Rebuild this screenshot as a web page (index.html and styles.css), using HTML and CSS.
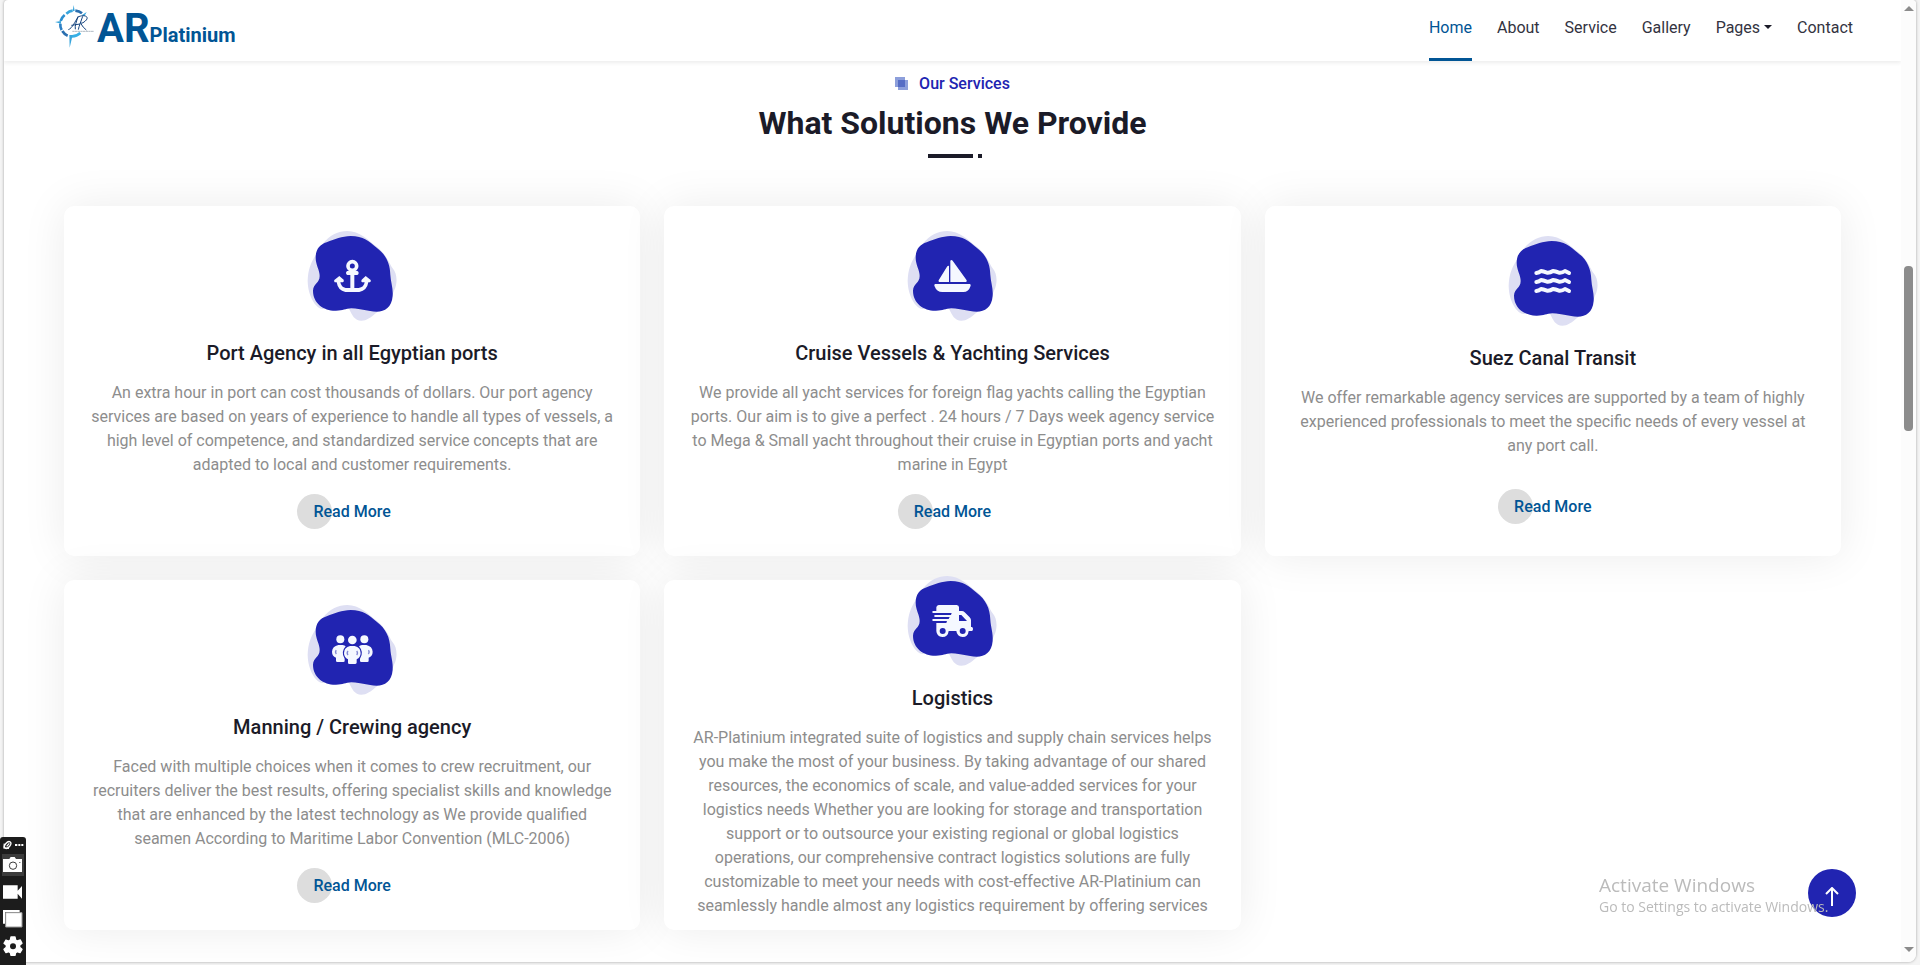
FILE: index.html
```html
<!DOCTYPE html>
<html lang="en">
<head>
<meta charset="utf-8">
<title>AR Platinium</title>
<link rel="stylesheet" href="styles.css">
</head>
<body>
<svg class="defs" aria-hidden="true">
  <symbol id="blob" viewBox="81 63 270 270">
    <path fill="#dedff3" d="M128 101C150 75 175 63 202 63C240 64 262 88 290 110C318 130 330 165 338 175C352 190 353 220 343 240C335 262 318 285 292 306C270 324 260 332 244 332C224 332 216 315 207 296L128 297C110 297 84 262 83 213C84 180 92 160 104 140Z"/>
    <path fill="#2124b1" d="M212 78C250 78 268 95 290 113C318 134 330 160 331 194C332 215 340 235 338 258C335 292 315 305 290 305C262 305 246 296 214 295C195 296 190 302 168 302C132 303 99 280 99 242C100 220 119 220 119 198C119 180 107 165 107 143C107 118 120 103 140 97C165 87 185 79 212 78Z"/>
  </symbol>
</svg>
<div class="window">
  <div class="page">
    <header class="navbar">
      <a class="brand" href="#">
        <svg class="brand-mark" viewBox="0 0 117 129" aria-hidden="true">
          <g fill="none" stroke-width="8">
            <path stroke="#38a5dc" d="M34 26Q43 18 53 17"/>
            <path stroke="#2a6fb0" d="M61 17Q73 18 81 25"/>
            <path stroke="#2c8fd0" d="M17 48Q20 37 29 30"/>
            <path stroke="#2c7fc4" d="M16 56Q15 66 20 75"/>
            <path stroke="#2a6fb0" d="M22 78Q28 88 38 92"/>
            <path stroke="#38b0e5" d="M49 94Q64 95 76 84"/>
          </g>
          <path fill="#38a5dc" d="M53 19L56 0L59 18ZM0 51L18 48V56ZM43 90H53L44 128ZM81 30L95 21L88 34Z"/>
          <g fill="none" stroke="#17457f" stroke-width="3">
            <path d="M40 74C52 70 61 48 70 34C64 48 59 64 61 73M49 61L75 57M83 34C78 49 72 63 70 74M71 35C92 27 104 37 91 48Q84 55 77 55Q84 68 94 75"/>
          </g>
          <path stroke="#8896a5" stroke-width="2" stroke-dasharray="7 1" d="M52 79H117"/>
        </svg>
        <span class="brand-name">AR<small>Platinium</small></span>
      </a>
      <nav class="nav">
        <a class="active" href="#">Home</a>
        <a href="#">About</a>
        <a href="#">Service</a>
        <a href="#">Gallery</a>
        <a class="has-menu" href="#">Pages</a>
        <a href="#">Contact</a>
      </nav>
    </header>

    <main class="services">
      <div class="heading">
        <p class="eyebrow">
          <svg width="13" height="13" viewBox="0 0 13 13" aria-hidden="true"><path fill="#8d9fdb" d="M0 0H10V10H0ZM3 3H13V13H3Z"/><path fill="#566dc5" d="M3 3H10V10H3Z"/></svg>
          Our Services
        </p>
        <h1>What Solutions We Provide</h1>
        <div class="rule"><i></i><b></b></div>
      </div>

      <div class="cards">
        <article class="card">
          <svg class="icon" viewBox="81 63 270 270" aria-hidden="true"><use href="#blob" x="81" y="63" width="270" height="270"/>
            <circle cx="217" cy="168" r="13" fill="none" stroke="#f5f8ff" stroke-width="11"/>
            <path fill="#f5f8ff" d="M202 183H232Q236 184 236 189Q236 194 232 195H223V234H236Q252 232 254 217H246Q242 214 245 209L257 198L272 210Q274 214 270 217H265Q261 242 238 246H196Q174 242 170 217H164Q161 213 163 210L178 198L191 209Q193 214 189 217H181Q184 232 197 234H211V195H202Q198 194 198 189Q198 184 202 183Z"/>
          </svg>
          <h2>Port Agency in all Egyptian ports</h2>
          <p>An extra hour in port can cost thousands of dollars. Our port agency services are based on years of experience to handle all types of vessels, a high level of competence, and standardized service concepts that are adapted to local and customer requirements.</p>
          <a class="more" href="#">Read More</a>
        </article>

        <article class="card">
          <svg class="icon" viewBox="81 63 270 270" aria-hidden="true"><use href="#blob" x="81" y="63" width="270" height="270"/>
            <path fill="#f5f8ff" d="M211 152Q214 148 218 152L260 211Q262 216 257 216H211ZM207 168V216H178Q174 215 176 211L201 170Q204 166 207 168ZM166 222H269Q273 223 272 227Q266 246 250 246H187Q170 246 163 227Q162 223 166 222Z"/>
          </svg>
          <h2>Cruise Vessels &amp; Yachting Services</h2>
          <p>We provide all yacht services for foreign flag yachts calling the Egyptian ports. Our aim is to give a perfect . 24 hours / 7 Days week agency service to Mega &amp; Small yacht throughout their cruise in Egyptian ports and yacht marine in Egypt</p>
          <a class="more" href="#">Read More</a>
        </article>

        <article class="card">
          <svg class="icon" viewBox="81 63 270 270" aria-hidden="true"><use href="#blob" x="81" y="63" width="270" height="270"/>
            <g fill="none" stroke="#f5f8ff" stroke-width="12" stroke-linecap="round" stroke-linejoin="round">
              <path id="wave" d="M166 174Q174 173 180 168Q186 169 198 173Q207 174 216 168Q223 169 234 173Q244 174 252 168Q256 170 264 174"/>
              <use href="#wave" y="27"/><use href="#wave" y="54"/>
            </g>
          </svg>
          <h2>Suez Canal Transit</h2>
          <p>We offer remarkable agency services are supported by a team of highly experienced professionals to meet the specific needs of every vessel at any port call.</p>
          <a class="more" href="#">Read More</a>
        </article>

        <article class="card">
          <svg class="icon" viewBox="81 63 270 270" aria-hidden="true"><use href="#blob" x="81" y="63" width="270" height="270"/>
            <g fill="#f5f8ff">
              <circle cx="181" cy="166" r="12"/><circle cx="217" cy="168" r="13"/><circle cx="253" cy="166" r="12"/>
              <path d="M175 183H188Q194 184 197 187Q181 205 194 224V232Q193 234 190 234H172Q168 234 168 230V221Q156 216 156 203Q157 187 175 183Z"/>
              <path d="M259 183H246Q240 184 237 187Q253 205 240 224V232Q241 234 244 234H262Q266 234 266 230V221Q278 216 278 203Q277 187 259 183Z"/>
              <path d="M210 186H224Q242 190 242 207Q242 220 230 226V236Q229 240 225 240H208Q204 240 204 236V226Q192 220 192 207Q192 190 210 186Z"/>
            </g>
            <path fill="none" stroke="#8489d3" stroke-width="4" d="M169 199Q164 204 169 210M265 199Q270 204 265 210M204 201Q199 207 204 213M230 201Q235 207 230 213"/>
          </svg>
          <h2>Manning / Crewing agency</h2>
          <p>Faced with multiple choices when it comes to crew recruitment, our recruiters deliver the best results, offering specialist skills and knowledge that are enhanced by the latest technology as We provide qualified seamen According to Maritime Labor Convention (MLC-2006)</p>
          <a class="more" href="#">Read More</a>
        </article>

        <article class="card">
          <svg class="icon" viewBox="81 63 270 270" aria-hidden="true"><use href="#blob" x="81" y="63" width="270" height="270"/>
            <path fill="#f5f8ff" fill-rule="evenodd" d="M176 150H230Q237 151 237 157V168H246Q250 168 254 172L269 187Q273 191 273 196V216H276Q279 217 279 222Q279 227 276 228H266Q264 246 248 246Q231 245 229 228H206Q204 246 187 246Q170 245 169 228V204H199L201 198H158Q156 195 158 192H206L209 186H164Q161 183 164 180H213L215 174H158Q156 171 158 168H169V157Q170 151 176 150ZM237 180V198H261L244 180Z"/>
            <circle cx="188" cy="228" r="9" fill="#2124b1"/><circle cx="248" cy="228" r="9" fill="#2124b1"/>
          </svg>
          <h2>Logistics</h2>
          <p>AR-Platinium integrated suite of logistics and supply chain services helps you make the most of your business. By taking advantage of our shared resources, the economics of scale, and value-added services for your logistics needs Whether you are looking for storage and transportation support or to outsource your existing regional or global logistics operations, our comprehensive contract logistics solutions are fully customizable to meet your needs with cost-effective AR-Platinium can seamlessly handle almost any logistics requirement by offering services</p>
        </article>
      </div>
    </main>
  </div>

  <div class="scrollbar" aria-hidden="true">
    <i class="arrow up"></i>
    <i class="thumb"></i>
    <i class="arrow down"></i>
  </div>
</div>

<a class="to-top" href="#" aria-label="Back to top">
  <svg width="14" height="20" viewBox="0 0 14 20" fill="none" stroke="#fff" stroke-width="2"><path d="M7 19V2M1 7L7 1L13 7"/></svg>
</a>

<div class="activate">
  <strong>Activate Windows</strong>
  <span>Go to Settings to activate Windows.</span>
</div>

<div class="recorder">
  <div class="grip">
    <svg width="24" height="12" viewBox="0 0 72 36" aria-hidden="true"><g fill="none" stroke="#fff" stroke-width="4"><ellipse cx="20" cy="18" rx="12" ry="7" transform="rotate(-50 20 18)"/><path d="M10 14L9 27L24 28M17 22L25 13"/></g><path fill="#fff" d="M42 15H49V21H42ZM52 15H58V21H52ZM61 15H67V21H61Z"/></svg>
  </div>
  <button class="on" aria-label="Take screenshot"><svg width="22" height="22" viewBox="0 0 66 66"><path fill="#fff" d="M3 15H22L26 9H38L42 15H60V54H3Z"/><circle cx="33" cy="35" r="11" fill="#fff" stroke="#3c3c3c" stroke-width="3"/><path fill="#3c3c3c" d="M52 24H55V27H52Z"/></svg></button>
  <button aria-label="Record video"><svg width="22" height="22" viewBox="0 0 66 66"><path fill="#fff" d="M3 13H47V29L60 15V53L47 38V53H3Z"/></svg></button>
  <button aria-label="Gallery"><svg width="22" height="22" viewBox="0 0 66 66"><path fill="#fff" d="M3 6H53V13H9V47H3Z"/><path fill="#fff" stroke="#999" stroke-width="3" d="M11 14H60V57H11Z"/></svg></button>
  <button aria-label="Settings"><svg width="22" height="22" viewBox="0 0 66 66"><path fill="#fff" stroke="#fff" stroke-width="4" stroke-linejoin="round" d="M27 6H39L41 15L46 18L55 15L60 25L53 31V37L60 43L54 53L46 50L41 53L39 61H27L25 53L20 50L12 53L6 43L13 37V31L6 25L12 15L20 18L25 15Z"/><circle cx="33" cy="34" r="9" fill="#1c1c1c"/></svg></button>
</div>
</body>
</html>
```
FILE: styles.css
```css
* { box-sizing: border-box; }

body {
  margin: 0;
  background: #f4f4f4;
  color: #1b1b28;
  font: 16px/24px Roboto, "Liberation Sans", sans-serif;
}

a { color: inherit; text-decoration: none; }
h1, h2, p { margin: 0; }
.defs { position: absolute; width: 0; height: 0; }

.window {
  display: flex;
  min-height: calc(100vh - 3px);
  margin: 0 4px 3px;
  overflow: hidden;
  background: #fff;
  border-radius: 4px 4px 8px 8px;
  box-shadow: 0 0 3px rgba(0, 0, 0, .35);
}

.page { flex: 1; min-width: 0; }

.navbar {
  display: flex;
  justify-content: space-between;
  height: 61px;
  padding: 0 48px 0 51px;
  box-shadow: 0 2px 4px rgba(0, 0, 0, .075);
}

.brand { display: flex; gap: 3px; color: #015595; }
.brand-mark { width: 39px; height: 43px; margin-top: 5px; }
.brand-name { font-size: 40px; font-weight: 700; line-height: 58px; }
.brand-name small { font-size: 20px; }

.nav { display: flex; gap: 25px; color: #33333f; }
.nav a { padding: 16px 0 18px; border-bottom: 3px solid transparent; }
.nav a.active { color: #015595; border-bottom-color: #015595; }
.nav .has-menu::after {
  content: "";
  display: inline-block;
  margin-left: 4px;
  vertical-align: 4px;
  border: 4px solid transparent;
  border-top-color: #1b1b28;
  border-bottom: 0;
}

.services { padding: 11px 60px 32px; }

.heading {
  display: flex;
  flex-direction: column;
  align-items: center;
  padding-bottom: 48px;
}
.eyebrow {
  display: flex;
  align-items: center;
  gap: 11px;
  color: #2124b1;
  font-weight: 500;
}
.eyebrow svg { margin-bottom: 2px; }
h1 { margin: 7px 0 11px; font-size: 32px; font-weight: 700; line-height: 40px; }
.rule { display: flex; gap: 5px; width: 50px; height: 4px; }
.rule i { flex: none; width: 45px; background: #1b1b28; }
.rule b { flex: none; width: 4px; background: #1b1b28; }

.cards {
  display: grid;
  grid-template-columns: repeat(3, 1fr);
  grid-auto-rows: 350px;
  gap: 24px;
}
.card {
  display: flex;
  flex-direction: column;
  align-items: center;
  justify-content: center;
  padding: 0 24px;
  border-radius: 10px;
  background: #fff;
  box-shadow: 0 0 45px rgba(0, 0, 0, .08);
  text-align: center;
}
.icon { flex: none; width: 90px; height: 90px; margin-bottom: 20px; }
h2 { margin-bottom: 16px; font-size: 20px; font-weight: 500; line-height: 24px; }
.card p { flex: none; min-height: 86px; margin-bottom: 16px; color: #8d8d8d; }

.more {
  position: relative;
  z-index: 0;
  padding: 7px 0;
  color: #015595;
  font-weight: 500;
}
.more::before {
  content: "";
  position: absolute;
  z-index: -1;
  top: 1px;
  left: -16px;
  width: 35px;
  height: 35px;
  border-radius: 50%;
  background: #ddd;
}

.scrollbar {
  display: flex;
  flex-direction: column;
  align-items: center;
  width: 15px;
  padding: 6px 0 10px;
  background: #fcfcfc;
}
.arrow { border: 5px solid transparent; }
.up { border-top: 0; border-bottom-color: #8b8b8b; }
.down { margin-top: auto; border-bottom: 0; border-top-color: #8b8b8b; }
.thumb { width: 9px; height: 165px; margin-top: 255px; border-radius: 4px; background: #8b8b8b; }

.to-top {
  position: fixed;
  right: 64px;
  bottom: 48px;
  display: grid;
  place-items: center;
  width: 48px;
  height: 48px;
  padding-top: 7px;
  border-radius: 50%;
  background: #2124b1;
}

.activate {
  position: fixed;
  left: calc(100vw - 321px);
  bottom: 48px;
  display: flex;
  flex-direction: column;
  color: #bbb;
  font-family: "Open Sans", "Noto Sans", sans-serif;
  white-space: nowrap;
  pointer-events: none;
}
.activate strong { font-size: 19px; font-weight: 400; }
.activate span { font-size: 14px; line-height: 20px; }

.recorder {
  position: fixed;
  left: 0;
  bottom: 0;
  display: flex;
  flex-direction: column;
  align-items: center;
  gap: 5px;
  width: 26px;
  padding-bottom: 8px;
  border-radius: 3px 3px 0 0;
  background: #1c1c1c;
}
.grip { height: 12px; padding-top: 2px; line-height: 0; }
.recorder button { padding: 0; border: 0; background: none; line-height: 0; }
.recorder .on { background: #3c3c3c; }
```
